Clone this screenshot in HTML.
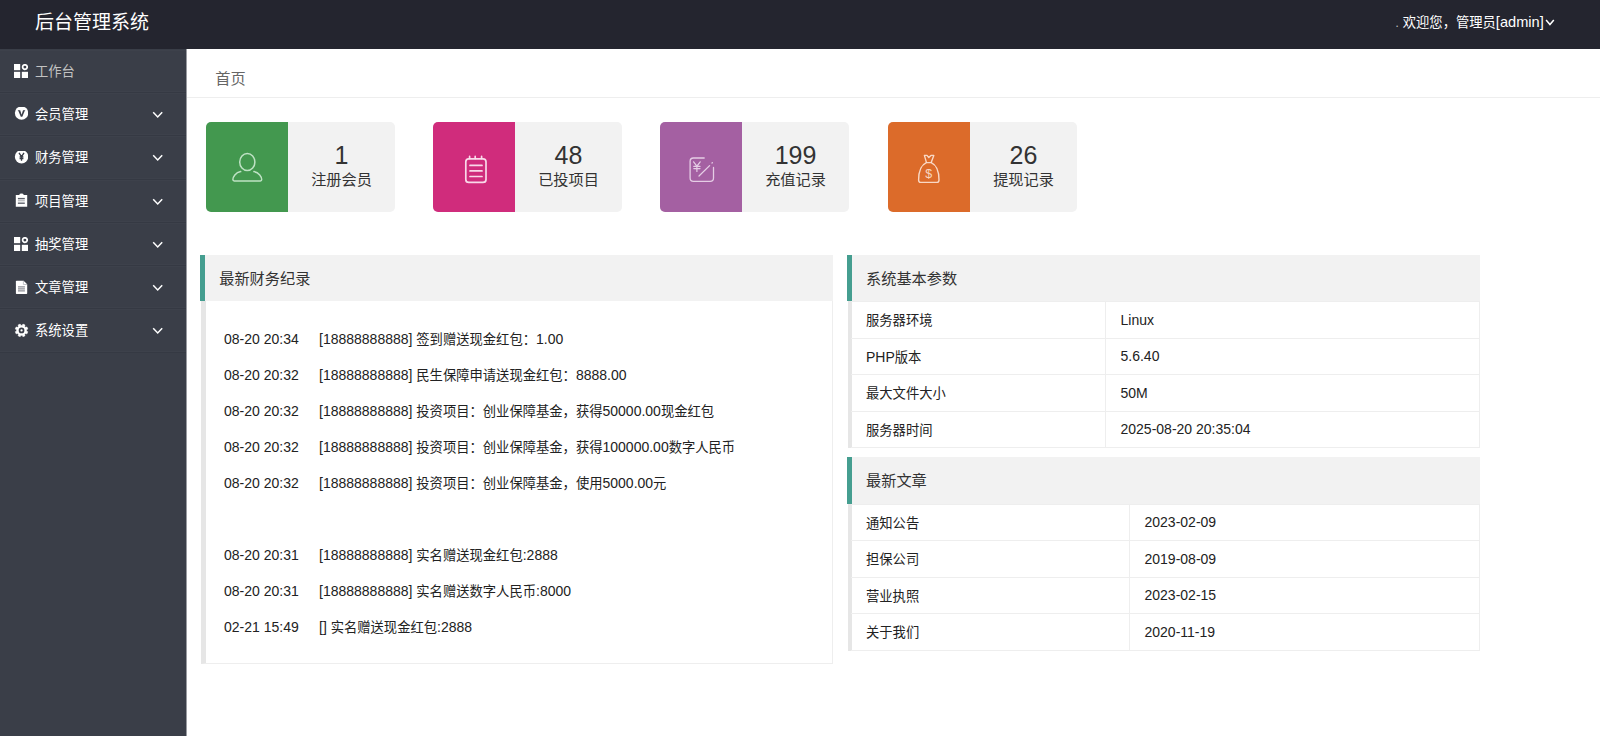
<!DOCTYPE html>
<html lang="zh-CN">
<head>
<meta charset="utf-8">
<title>后台管理系统</title>
<style>
*{box-sizing:border-box;margin:0;padding:0}
html,body{width:1600px;height:736px;overflow:hidden;background:#fff}
body{font-family:"Liberation Sans","Noto Sans CJK SC",sans-serif;font-size:13.3px;color:#222;position:relative}
/* header */
#header{position:absolute;left:0;top:0;width:1600px;height:49px;background:#24252f}
#logo{position:absolute;left:35px;top:0;height:46px;line-height:46.5px;font-size:19px;color:#fff;white-space:nowrap}
#user{position:absolute;right:56.3px;top:0;height:45px;line-height:45px;font-size:13.3px;color:#fff;white-space:nowrap}
#user .dot{color:#b4b4b8}
#userarrow{position:absolute;left:1545.2px;top:18.2px}
/* sidebar */
#side{position:absolute;left:0;top:49px;width:187px;height:687px;background:linear-gradient(to right,#3a3e48 0,#3a3e48 186px,#999ba1 186px)}
.nav{position:absolute;left:0;width:186px;height:43.25px;border-bottom:1px solid #353943;box-shadow:inset 0 1px 0 #3d414b,inset 0 -1px 0 #3d414b;color:#fff;font-size:13.3px;line-height:43.6px;white-space:nowrap}
.nav .ico{position:absolute;left:14px;top:14.2px;width:14px;height:14px}
.nav .txt{position:absolute;left:35px;top:0}
.nav .arr{position:absolute;left:152px;top:18px}
.nav.first{color:#c2c2c2}
/* breadcrumb */
#crumb{position:absolute;left:187px;top:49px;width:1413px;height:49px;border-bottom:1px solid #eee;background:#fff}
#crumb span{position:absolute;left:28.3px;top:0;line-height:59.8px;font-size:15.2px;color:#666}
/* cards */
.card{position:absolute;top:122px;width:189px;height:90px;background:#f2f2f2;border-radius:5px;overflow:hidden}
.card .ic{position:absolute;left:0;top:0;width:82px;height:90px}
.card .num{position:absolute;left:82px;width:107px;top:18px;text-align:center;font-size:25px;line-height:30px;color:#333}
.card .lab{position:absolute;left:82px;width:107px;top:47px;text-align:center;font-size:15.2px;line-height:22px;color:#333;white-space:nowrap}
.card svg{position:absolute}
/* panels */
.ptitle{position:absolute;height:46px;font-size:15.2px;line-height:47.5px;color:#333;white-space:nowrap}
.pbody{position:absolute;border-left:5px solid #e6e6e6;border-right:1px solid #eee;border-bottom:1px solid #eee;background:#fff}
.log{position:absolute;left:18px;height:20px;line-height:20px;font-size:13.3px;color:#222;white-space:nowrap}
.log b{font-weight:normal;position:absolute;left:95px;top:0}
i{font-style:normal;font-size:14px}
table{border-collapse:collapse;position:absolute;table-layout:fixed}
td{border:1px solid #eee;height:36.5px;font-size:13.3px;color:#222;padding:0 0 0 15px;white-space:nowrap}
td:first-child{border-left:0}
</style>
</head>
<body>
<div id="header">
  <div id="logo">后台管理系统</div>
  <div id="user"><span class="dot">.</span> 欢迎您，管理员<i style="font-size:14.6px">[admin]</i></div>
  <svg id="userarrow" width="10" height="9" viewBox="0 0 10 9"><path d="M1.1 2 L4.95 6.6 L8.8 2" fill="none" stroke="#fff" stroke-width="1.5"/></svg>
</div>

<div id="side">
  <div class="nav first" style="top:0.9px"><svg class="ico" viewBox="0 0 14 14"><rect x="0" y="0" width="6.2" height="6.2" fill="#fff"/><rect x="0" y="7.8" width="6.2" height="6.2" fill="#fff"/><rect x="7.8" y="7.8" width="6.2" height="6.2" fill="#fff"/><circle cx="10.9" cy="3.1" r="2.3" fill="none" stroke="#fff" stroke-width="1.7"/></svg><span class="txt">工作台</span></div>
  <div class="nav" style="top:44.15px"><svg class="ico" viewBox="0 0 14 14"><circle cx="7.55" cy="6.1" r="6.7" fill="#fff"/><path transform="translate(0,-0.9)" d="M3.6 4.2 H6.2 L7.6 8.6 L9 4.2 H11.4 L10.6 5.2 L8.3 10.6 H6.8 L4.5 5.2 Z" fill="#3a3e48"/></svg><span class="txt">会员管理</span><svg class="arr" width="12" height="8" viewBox="0 0 12 8"><path d="M1.2 1.2 L5.7 6 L10.2 1.2" fill="none" stroke="#fff" stroke-width="1.5"/></svg></div>
  <div class="nav" style="top:87.4px"><svg class="ico" viewBox="0 0 14 14"><circle cx="7.55" cy="5.7" r="6.7" fill="#fff"/><path transform="translate(0,-1.3)" d="M5 3.2 L7.5 7 L10 3.2 M7.5 7 V11 M5.6 7.3 H9.4 M5.6 9 H9.4" fill="none" stroke="#3a3e48" stroke-width="1.3"/></svg><span class="txt">财务管理</span><svg class="arr" width="12" height="8" viewBox="0 0 12 8"><path d="M1.2 1.2 L5.7 6 L10.2 1.2" fill="none" stroke="#fff" stroke-width="1.5"/></svg></div>
  <div class="nav" style="top:130.65px"><svg class="ico" viewBox="0 0 14 14" style="overflow:visible"><path d="M1.8 0.9 H5.2 Q5.6 -0.4 7.5 -0.4 Q9.4 -0.4 9.8 0.9 H13.2 V12.7 H1.8 Z" fill="#fff"/><path d="M3.9 4.6 H10.8" stroke="#5f626c" stroke-width="1.4" fill="none"/><path d="M3.9 6.8 H10.8" stroke="#8d8f96" stroke-width="0.8" fill="none"/><path d="M3.9 9.2 H10.8" stroke="#5f626c" stroke-width="1.4" fill="none"/></svg><span class="txt">项目管理</span><svg class="arr" width="12" height="8" viewBox="0 0 12 8"><path d="M1.2 1.2 L5.7 6 L10.2 1.2" fill="none" stroke="#fff" stroke-width="1.5"/></svg></div>
  <div class="nav" style="top:173.9px"><svg class="ico" viewBox="0 0 14 14"><rect x="0" y="0" width="6.2" height="6.2" fill="#fff"/><rect x="0" y="7.8" width="6.2" height="6.2" fill="#fff"/><rect x="7.8" y="7.8" width="6.2" height="6.2" fill="#fff"/><circle cx="10.9" cy="3.1" r="2.3" fill="none" stroke="#fff" stroke-width="1.7"/></svg><span class="txt">抽奖管理</span><svg class="arr" width="12" height="8" viewBox="0 0 12 8"><path d="M1.2 1.2 L5.7 6 L10.2 1.2" fill="none" stroke="#fff" stroke-width="1.5"/></svg></div>
  <div class="nav" style="top:217.15px"><svg class="ico" viewBox="0 0 14 14"><path d="M2.6 0.7 H9.6 L13.2 4.3 V13.2 Q13.2 13.9 12.5 13.9 H2.6 Q1.9 13.9 1.9 13.2 V1.4 Q1.9 0.7 2.6 0.7 Z" fill="#fff"/><path d="M9.4 0.9 V4.5 H13" fill="none" stroke="#b5b7bc" stroke-width="0.8"/><path d="M4 6.9 H10.9 M4 8.9 H10.9 M4 10.9 H10.9" stroke="#8d8f96" stroke-width="1.1" fill="none"/></svg><span class="txt">文章管理</span><svg class="arr" width="12" height="8" viewBox="0 0 12 8"><path d="M1.2 1.2 L5.7 6 L10.2 1.2" fill="none" stroke="#fff" stroke-width="1.5"/></svg></div>
  <div class="nav" style="top:260.4px"><svg class="ico" viewBox="0 0 14 14" style="overflow:visible"><g transform="translate(0,-0.5)"><path d="M12.52 7.45 L13.84 8.31 L13.00 10.36 L11.45 10.03 L10.68 10.80 L11.01 12.35 L8.96 13.19 L8.10 11.87 L7.00 11.87 L6.14 13.19 L4.09 12.35 L4.42 10.80 L3.65 10.03 L2.10 10.36 L1.26 8.31 L2.58 7.45 L2.58 6.35 L1.26 5.49 L2.10 3.44 L3.65 3.77 L4.42 3.00 L4.09 1.45 L6.14 0.61 L7.00 1.93 L8.10 1.93 L8.96 0.61 L11.01 1.45 L10.68 3.00 L11.45 3.77 L13.00 3.44 L13.84 5.49 L12.52 6.35 Z" fill="#fff" stroke="#fff" stroke-width="0.5" stroke-linejoin="round"/><circle cx="7.55" cy="6.9" r="2.0" fill="none" stroke="#3a3e48" stroke-width="1.7"/></g></svg><span class="txt">系统设置</span><svg class="arr" width="12" height="8" viewBox="0 0 12 8"><path d="M1.2 1.2 L5.7 6 L10.2 1.2" fill="none" stroke="#fff" stroke-width="1.5"/></svg></div>
</div>

<div id="crumb"><span>首页</span></div>

<div class="card" style="left:206px"><div class="ic" style="background:#43984f"></div><svg style="left:-1.1px;top:0" width="84" height="90" viewBox="0 0 83 90"><g fill="none" stroke="#d4efd8" stroke-opacity="0.85" stroke-width="1.5" stroke-linecap="round"><ellipse cx="41.8" cy="40" rx="7.6" ry="8.5"/><path d="M35.2 49.6 C30 50.6 27.4 55 27.4 57.6 Q27.4 58.9 28.7 58.9 L54.9 58.9 Q56.2 58.9 56.2 57.6 C56.2 55 53.6 50.6 48.4 49.6"/></g></svg><div class="num">1</div><div class="lab">注册会员</div></div>
<div class="card" style="left:433px"><div class="ic" style="background:#d02c7c"></div><svg style="left:0;top:0" width="83" height="90" viewBox="0 0 83 90"><g fill="none" stroke="#fbe3ef" stroke-opacity="0.95" stroke-width="1.7" stroke-linecap="round"><rect x="32.8" y="36.8" width="20.2" height="23.6" rx="3"/><path d="M37 43.4 H49 M37 48.9 H49 M37 54.5 H49"/><path d="M36.6 34.4 V36.4 M42.2 34.4 V36.4 M48.6 34.4 V36.4"/></g></svg><div class="num">48</div><div class="lab">已投项目</div></div>
<div class="card" style="left:660px"><div class="ic" style="background:#a460a2"></div><svg style="left:0px;top:0" width="83" height="90" viewBox="0 0 83 90"><g fill="none" stroke="#ecd9ec" stroke-opacity="0.9" stroke-width="1.3" stroke-linecap="round"><path d="M44.2 36 H33.4 Q30.1 36 30.1 39.3 V56.1 Q30.1 59.4 33.4 59.4 H50.2 Q53.5 59.4 53.5 56.1 V45.4"/><path d="M39 54 L49.6 43.6"/><path d="M52 41 L52.4 40.6"/><path d="M33.6 39.8 L36.9 44.2 L40.2 39.8 M36.9 44.2 V49.4 M33.8 44.4 H40 M33.8 46.6 H40" stroke-width="1.2"/></g></svg><div class="num">199</div><div class="lab">充值记录</div></div>
<div class="card" style="left:888px"><div class="ic" style="background:#dc6b2a"></div><svg style="left:0;top:0" width="83" height="90" viewBox="0 0 83 90"><g fill="none" stroke="#fbe2d2" stroke-opacity="0.92" stroke-width="1.4" stroke-linejoin="round" stroke-linecap="round"><path d="M38.4 40.6 C33 43 30.6 50 30.6 58 Q30.6 60.4 32.6 60.4 H49 Q51 60.4 51 58 C51 50 48.6 43 43.2 40.6 Z"/><path d="M38.4 40.4 L36.4 33.4 L39 33.4 L40.8 35.6 L43 33.4 L45.8 33.4 L43.2 40.4"/></g><text x="40.8" y="55.6" text-anchor="middle" font-family="Liberation Sans, sans-serif" font-size="12.5" fill="#fbe2d2" fill-opacity="0.92">$</text></svg><div class="num">26</div><div class="lab">提现记录</div></div>

<!-- left panel -->
<div class="ptitle" style="left:200px;top:255px;width:633px;padding-left:19.2px;background:linear-gradient(to right,#fff 0,#fff 0.5px,#459e90 0.5px,#459e90 5px,#f2f2f2 5px)">最新财务纪录</div>
<div class="pbody" style="left:201px;top:301px;width:632px;height:363px">
  <div class="log" style="top:28px"><i>08-20 20:34</i><b><i>[18888888888] </i>签到赠送现金红包：<i>1.00</i></b></div>
  <div class="log" style="top:64px"><i>08-20 20:32</i><b><i>[18888888888] </i>民生保障申请送现金红包：<i>8888.00</i></b></div>
  <div class="log" style="top:100px"><i>08-20 20:32</i><b><i>[18888888888] </i>投资项目：创业保障基金，获得<i>50000.00</i>现金红包</b></div>
  <div class="log" style="top:136px"><i>08-20 20:32</i><b><i>[18888888888] </i>投资项目：创业保障基金，获得<i>100000.00</i>数字人民币</b></div>
  <div class="log" style="top:172px"><i>08-20 20:32</i><b><i>[18888888888] </i>投资项目：创业保障基金，使用<i>5000.00</i>元</b></div>
  <div class="log" style="top:244px"><i>08-20 20:31</i><b><i>[18888888888] </i>实名赠送现金红包<i>:2888</i></b></div>
  <div class="log" style="top:280px"><i>08-20 20:31</i><b><i>[18888888888] </i>实名赠送数字人民币<i>:8000</i></b></div>
  <div class="log" style="top:316px"><i>02-21 15:49</i><b><i>[] </i>实名赠送现金红包<i>:2888</i></b></div>
</div>

<!-- right panel 1 -->
<div class="ptitle" style="left:846px;top:255px;width:634px;padding-left:20px;background:linear-gradient(to right,#fff 0,#fff 0.8px,#459e90 0.8px,#459e90 5.6px,#f2f2f2 5.6px)">系统基本参数</div>
<div class="pbody" style="left:848px;top:301px;width:631px;height:147px;border:0;border-left:4px solid #e6e6e6">
  <table style="left:-1px;top:0;width:629px">
    <colgroup><col style="width:254px"><col></colgroup>
    <tr><td>服务器环境</td><td><i>Linux</i></td></tr>
    <tr><td><i>PHP</i>版本</td><td><i>5.6.40</i></td></tr>
    <tr><td>最大文件大小</td><td><i>50M</i></td></tr>
    <tr><td>服务器时间</td><td><i>2025-08-20 20:35:04</i></td></tr>
  </table>
</div>

<!-- right panel 2 -->
<div class="ptitle" style="left:846px;top:457.4px;width:634px;height:46.4px;padding-left:20px;background:linear-gradient(to right,#fff 0,#fff 0.8px,#459e90 0.8px,#459e90 5.6px,#f2f2f2 5.6px)">最新文章</div>
<div class="pbody" style="left:848px;top:503.5px;width:631px;height:147px;border:0;border-left:4px solid #e6e6e6">
  <table style="left:-1px;top:0;width:629px">
    <colgroup><col style="width:278px"><col></colgroup>
    <tr><td>通知公告</td><td><i>2023-02-09</i></td></tr>
    <tr><td>担保公司</td><td><i>2019-08-09</i></td></tr>
    <tr><td>营业执照</td><td><i>2023-02-15</i></td></tr>
    <tr><td>关于我们</td><td><i>2020-11-19</i></td></tr>
  </table>
</div>
</body>
</html>
